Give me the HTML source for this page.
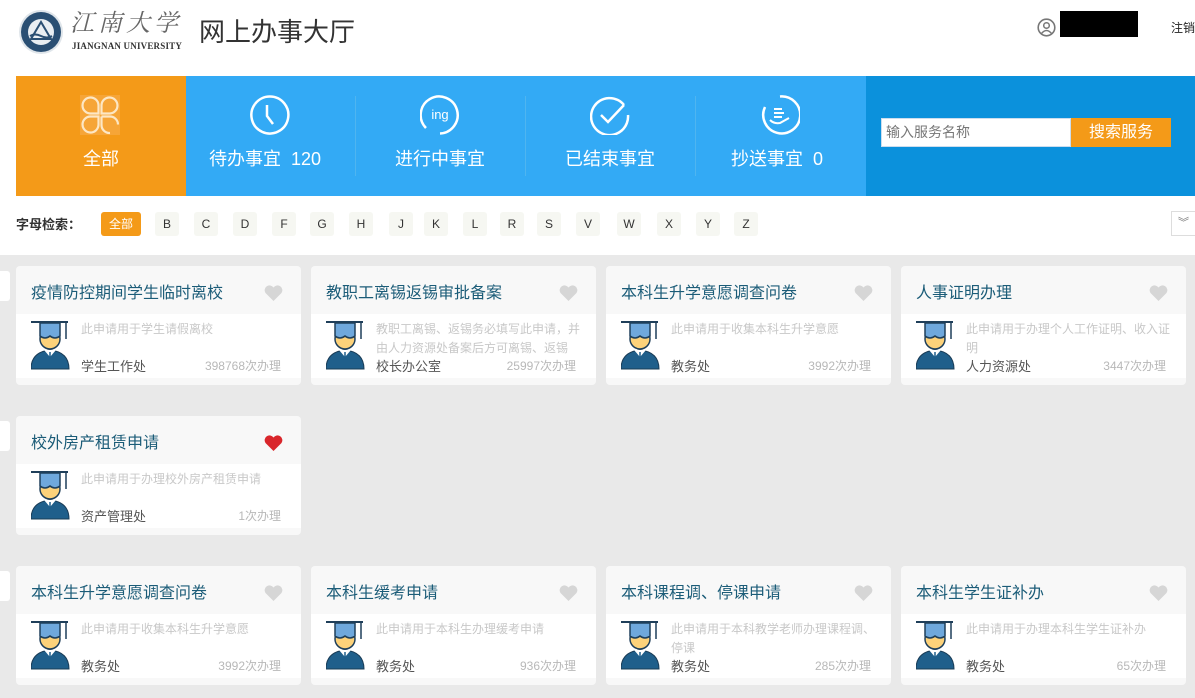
<!DOCTYPE html>
<html><head><meta charset="utf-8">
<style>
*{margin:0;padding:0;box-sizing:border-box}
body{width:1195px;height:698px;overflow:hidden;background:#e9e9e9;font-family:"Liberation Sans","Noto Sans CJK SC",sans-serif;position:relative}
.a{position:absolute}
.top{left:0;top:0;width:1195px;height:255px;background:#fff}
.tab{top:76px;height:120px}
.lbl{width:170px;text-align:center;top:145px;color:#fff;font-size:18px;line-height:28px}
.ic{top:95px}
.div{top:96px;width:1px;height:80px;background:#4fb5f0}
.lt{top:212px;width:24px;height:24px;background:#f6f7f2;border-radius:3px;font-size:12px;line-height:24px;text-align:center;color:#333}
.card{width:285px;height:119px;background:#f8f8f8;border-radius:4px;overflow:hidden}
.card .t{position:absolute;left:15px;top:13px;font-size:16px;color:#1b5c78;white-space:nowrap}
.card .b{position:absolute;left:0;top:48px;width:285px;height:64px;background:#fff}
.card .d{position:absolute;left:65px;top:6px;width:205px;font-size:12px;line-height:19px;color:#c8c8c8;height:38px;overflow:hidden}
.card .dep{position:absolute;left:65px;top:42px;font-size:13px;color:#555}
.card .n{position:absolute;right:20px;top:43px;font-size:12px;color:#b8b8b8}
.card .h{position:absolute;left:248px;top:19px}
.card .av{position:absolute;left:15px;top:6px}
.side{left:0;width:10px;height:30px;background:#fff;border-radius:0 3px 3px 0}
</style></head><body>
<div class="a top"></div>
<svg class="a" style="left:18px;top:9px" width="46" height="46" viewBox="0 0 46 46"><circle cx="23" cy="23" r="22" fill="#dfe5ea"/><circle cx="23" cy="23" r="20" fill="#2a4f73"/><circle cx="23" cy="23" r="13" fill="#e9eef2"/><path d="M13 30 L23 13 L33 30Z" fill="none" stroke="#2a4f73" stroke-width="2"/><path d="M12 27q5-3 11 0t11 0" stroke="#2a4f73" stroke-width="2" fill="none"/></svg>
<div class="a" style="left:70px;top:9px;font-family:'Liberation Serif','Noto Serif CJK SC',serif;font-style:italic;font-size:24px;color:#666;letter-spacing:4px;line-height:30px">江南大学</div>
<div class="a" style="left:72px;top:41px;font-family:'Liberation Serif',serif;font-size:9px;font-weight:bold;color:#333;letter-spacing:0.2px">JIANGNAN UNIVERSITY</div>
<div class="a" style="left:199px;top:14px;font-size:26px;color:#333;line-height:36px">网上办事大厅</div>
<svg class="a" style="left:1037px;top:18px" width="19" height="19" viewBox="0 0 19 19"><circle cx="9.5" cy="9.5" r="8.3" fill="none" stroke="#777" stroke-width="1.6"/><circle cx="9.5" cy="7.5" r="2.8" fill="none" stroke="#777" stroke-width="1.5"/><path d="M4.5 15.5q5-6 10 0" fill="none" stroke="#777" stroke-width="1.5"/></svg>
<div class="a" style="left:1060px;top:11px;width:78px;height:26px;background:#000"></div>
<div class="a" style="left:1171px;top:19px;font-size:12px;color:#222">注销</div>
<div class="a tab" style="left:16px;width:170px;background:#f49a18"></div>
<div class="a tab" style="left:186px;width:680px;background:#33aaf5"></div>
<div class="a tab" style="left:866px;width:329px;background:#0b91dc"></div>
<div class="a div" style="left:355px"></div><div class="a div" style="left:525px"></div><div class="a div" style="left:695px"></div>
<svg class="a ic" style="left:80px" width="40" height="40" viewBox="0 0 40 40"><rect width="40" height="40" fill="#f6a537"/><g fill="none" stroke="#fde7c4" stroke-width="2.2"><path d="M18.5 18.5H10a8 8 0 1 1 8.5-8.5z"/><path d="M21.5 18.5H30a8 8 0 1 0-8.5-8.5z"/><path d="M18.5 21.5H10a8 8 0 1 0 8.5 8.5z"/><path d="M21.5 21.5v8.5a8 8 0 0 0 8.5 8"/><path d="M21.5 21.5H30a8 8 0 0 1 8 8"/></g></svg>
<div class="a lbl" style="left:16px">全部</div>
<svg class="a ic" style="left:250px" width="40" height="40" viewBox="0 0 40 40"><path d="M20 1.5A18.5 18.5 0 1 1 5 9" fill="none" stroke="#fff" stroke-width="2.5"/><path d="M20 1.5A18.5 18.5 0 0 0 5 9" fill="none" stroke="#fff" stroke-width="2.5"/><path d="M17 10v11l6 8" fill="none" stroke="#fff" stroke-width="2.5"/></svg>
<div class="a lbl" style="left:180px">待办事宜&nbsp; 120</div>
<svg class="a ic" style="left:420px" width="40" height="40" viewBox="0 0 40 40"><path d="M6 33A18.5 18.5 0 1 1 20 38.5" fill="none" stroke="#fff" stroke-width="2.5"/><text x="20" y="24" font-size="13" fill="#fff" text-anchor="middle" font-family="Liberation Sans">ing</text></svg>
<div class="a lbl" style="left:355px">进行中事宜</div>
<svg class="a ic" style="left:590px" width="40" height="40" viewBox="0 0 40 40"><path d="M34 10A18.5 18.5 0 1 0 38 20" fill="none" stroke="#fff" stroke-width="2.5"/><path d="M11 20l7 7 16-17" fill="none" stroke="#fff" stroke-width="2.5"/></svg>
<div class="a lbl" style="left:525px">已结束事宜</div>
<svg class="a ic" style="left:760px" width="40" height="40" viewBox="0 0 40 40"><path d="M5 12A18.5 18.5 0 1 0 20 1.5" fill="none" stroke="#fff" stroke-width="2.5"/><path d="M14 14h8M14 18h10M14 22h8" stroke="#fff" stroke-width="2"/><path d="M10 25q4 4 10 3l9-5" fill="none" stroke="#fff" stroke-width="2"/></svg>
<div class="a lbl" style="left:692px">抄送事宜&nbsp; 0</div>
<div class="a" style="left:881px;top:118px;width:190px;height:29px;background:#fff;border:1px solid #cde;font-size:14px;color:#777;line-height:27px;padding-left:4px">输入服务名称</div>
<div class="a" style="left:1071px;top:118px;width:100px;height:29px;background:#f49a18;color:#fff;font-size:16px;line-height:29px;text-align:center">搜索服务</div>
<div class="a" style="left:16px;top:214px;font-size:13px;font-weight:bold;color:#333">字母检索：</div>
<div class="a lt" style="left:101px;width:40px;background:#f49a18;color:#fff;font-size:12px">全部</div>
<div class="a lt" style="left:155px">B</div><div class="a lt" style="left:194px">C</div><div class="a lt" style="left:233px">D</div><div class="a lt" style="left:272px">F</div><div class="a lt" style="left:310px">G</div><div class="a lt" style="left:349px">H</div><div class="a lt" style="left:389px">J</div><div class="a lt" style="left:424px">K</div><div class="a lt" style="left:463px">L</div><div class="a lt" style="left:500px">R</div><div class="a lt" style="left:537px">S</div><div class="a lt" style="left:576px">V</div><div class="a lt" style="left:617px">W</div><div class="a lt" style="left:657px">X</div><div class="a lt" style="left:696px">Y</div><div class="a lt" style="left:734px">Z</div>
<div class="a" style="left:1171px;top:211px;width:25px;height:25px;border:1px solid #ddd;background:#fff;color:#777;font-size:11px;text-align:center;line-height:22px">︾</div>
<div class="a side" style="top:271px"></div><div class="a side" style="top:421px"></div><div class="a side" style="top:571px"></div>
<div id="cards"></div>
<script>
var av='<svg class="av" width="40" height="50" viewBox="0 0 40 50"><path d="M0 49q0-17 19-19q19 2 19 19z" fill="#1f5f8b" stroke="#1a3c56" stroke-width="1"/><path d="M13 30l6 7 6-7" fill="#fff"/><path d="M19 32v7" stroke="#1f5f8b" stroke-width="1.5"/><circle cx="19" cy="19" r="10" fill="#fdd27a" stroke="#1f3f5a" stroke-width="1.5"/><path d="M9 3h20v13q-5 4-10 0q-5 4-10 0z" fill="#6fa8dc" stroke="#1f3f5a" stroke-width="1.5"/><path d="M0 2h37" stroke="#1f3f5a" stroke-width="2"/><path d="M35 2v17" stroke="#1f3f5a" stroke-width="1.5"/></svg>';
function heart(c){return '<svg class="h" width="19" height="16" viewBox="0 0 19 16"><path d="M9.5 16L1.5 8A4.5 4.5 0 0 1 9.5 2.5A4.5 4.5 0 0 1 17.5 8Z" fill="'+c+'"/></svg>';}
var d=[
[16,266,"疫情防控期间学生临时离校","此申请用于学生请假离校","学生工作处","398768次办理",0],
[311,266,"教职工离锡返锡审批备案","教职工离锡、返锡务必填写此申请，并由人力资源处备案后方可离锡、返锡","校长办公室","25997次办理",0],
[606,266,"本科生升学意愿调查问卷","此申请用于收集本科生升学意愿","教务处","3992次办理",0],
[901,266,"人事证明办理","此申请用于办理个人工作证明、收入证明","人力资源处","3447次办理",0],
[16,416,"校外房产租赁申请","此申请用于办理校外房产租赁申请","资产管理处","1次办理",1],
[16,566,"本科生升学意愿调查问卷","此申请用于收集本科生升学意愿","教务处","3992次办理",0],
[311,566,"本科生缓考申请","此申请用于本科生办理缓考申请","教务处","936次办理",0],
[606,566,"本科课程调、停课申请","此申请用于本科教学老师办理课程调、停课","教务处","285次办理",0],
[901,566,"本科生学生证补办","此申请用于办理本科生学生证补办","教务处","65次办理",0]];
var h='';d.forEach(function(c){h+='<div class="a card" style="left:'+c[0]+'px;top:'+c[1]+'px"><div class="t">'+c[2]+'</div>'+heart(c[6]?'#d9262b':'#d6d6d6')+'<div class="b">'+av+'<div class="d">'+c[3]+'</div><div class="dep">'+c[4]+'</div><div class="n">'+c[5]+'</div></div></div>';});
document.getElementById('cards').innerHTML=h;
</script>
</body></html>
